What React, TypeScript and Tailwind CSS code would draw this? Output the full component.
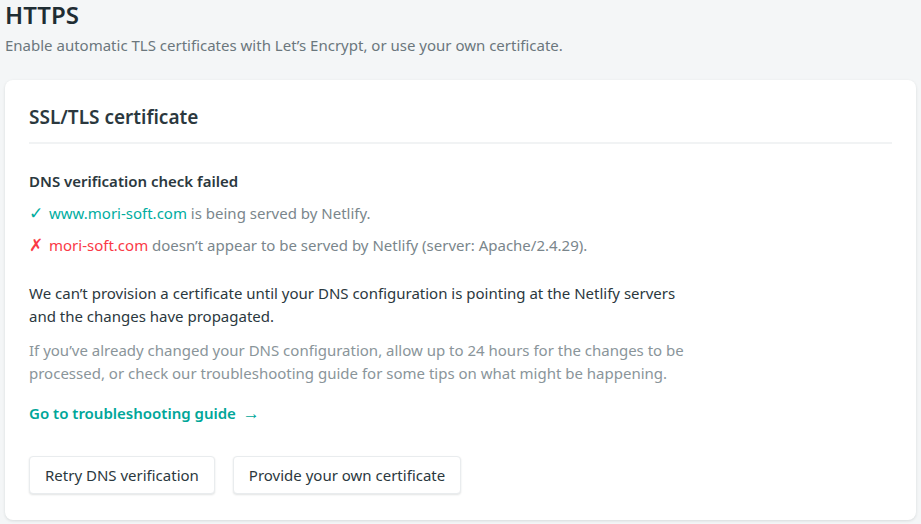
import React from "react";

export default function App() {
  return (
    <div
      className="min-h-[524px] w-full bg-[#f4f6f7] px-[5px] pt-[2px] text-[#2d3b41]"
      style={{ fontFamily: '"Noto Sans", "Open Sans", sans-serif' }}
    >
      <h1 className="text-[24px] font-semibold leading-[26px] text-[#1f2d33]">HTTPS</h1>
      <p className="mt-[6px] text-[15px] leading-[22px] text-[#6b777d]">
        Enable automatic TLS certificates with Let’s Encrypt, or use your own certificate.
      </p>
      <div className="mt-[24px] rounded-[8px] bg-white px-6 pb-[26px] shadow-[0_1px_3px_rgba(14,30,37,0.12)]">
        <div className="border-b-2 border-[#f1f3f4] pb-[12px] pt-[24px]">
          <h2 className="text-[19px] font-semibold leading-[26px] text-[#2b383e]">SSL/TLS certificate</h2>
        </div>
        <div className="pt-[26px] text-[15px] leading-[23px]">
          <h3 className="font-semibold text-[#2b383e]">DNS verification check failed</h3>
          <div className="mt-[8px] flex items-baseline text-[#7a868c]">
            <span className="mr-[4px] w-[16px] text-[17px] font-light text-[#00ad9f]">✓</span>
            <span>
              <span className="text-[#00ad9f]">www.mori-soft.com</span> is being served by Netlify.
            </span>
          </div>
          <div className="mt-[8px] flex items-baseline text-[#7a868c]">
            <span className="mr-[4px] w-[16px] text-[17px] font-light text-[#fa3946]">✗</span>
            <span>
              <span className="text-[#fa3946]">mori-soft.com</span> doesn’t appear to be served by Netlify (server: Apache/2.4.29).
            </span>
          </div>
          <p className="mt-[25px] max-w-[665px] text-[#2b383e]">
            We can’t provision a certificate until your DNS configuration is pointing at the Netlify servers and the changes have propagated.
          </p>
          <p className="mt-[11px] max-w-[665px] text-[#8a959a]">
            If you’ve already changed your DNS configuration, allow up to 24 hours for the changes to be processed, or check our troubleshooting guide for some tips on what might be happening.
          </p>
          <a className="mt-[16px] block font-semibold text-[#00a699]" href="#">
            Go to troubleshooting guide <span className="ml-[3px] text-[17px]">→</span>
          </a>
          <div className="mt-[31px] flex gap-[18px]">
            <button className="h-[38px] rounded-[4px] border border-[#e9ecee] bg-white px-[15px] text-[#2b383e] shadow-[0_1px_2px_rgba(14,30,37,0.12)]">
              Retry DNS verification
            </button>
            <button className="h-[38px] rounded-[4px] border border-[#e9ecee] bg-white px-[15px] text-[#2b383e] shadow-[0_1px_2px_rgba(14,30,37,0.12)]">
              Provide your own certificate
            </button>
          </div>
        </div>
      </div>
    </div>
  );
}
